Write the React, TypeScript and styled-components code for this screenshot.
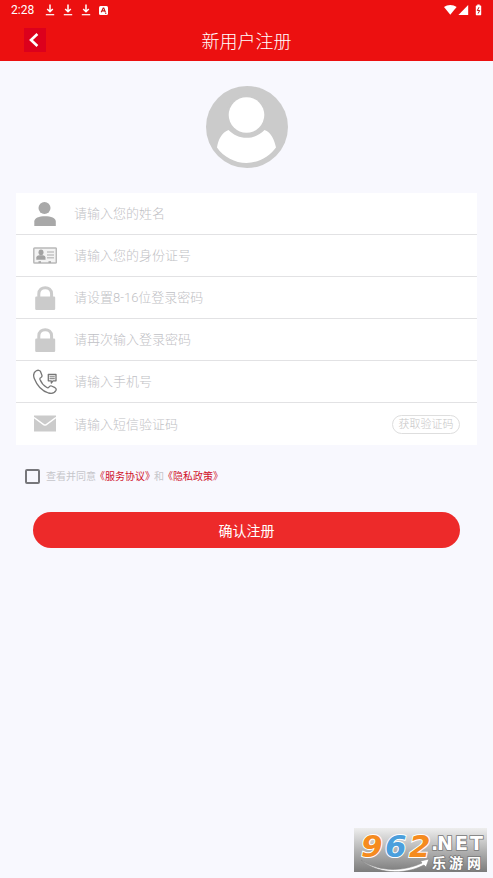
import React from "react";
import styled, { createGlobalStyle } from "styled-components";

const GlobalStyle = createGlobalStyle`
  *, *::before, *::after { box-sizing: border-box; }
  body {
    margin: 0;
    background: #f8f8fe;
    font-family: Roboto, "Noto Sans CJK SC", sans-serif;
  }
`;

const Page = styled.div`
  min-height: 100vh;
  display: flex;
  flex-direction: column;
`;

const Header = styled.header`
  background: #ec1010;
  color: #fff;
`;

const StatusBar = styled.div`
  height: 20px;
  padding: 0 11px;
  display: flex;
  align-items: center;
  justify-content: space-between;
  font-size: 12px;
  font-weight: 400;
`;

const StatusGroup = styled.div`
  display: flex;
  align-items: center;
  gap: 8px;
  svg { display: block; }
`;

const Clock = styled.span`
  margin-right: 3px;
`;

const TitleBar = styled.div`
  height: 41px;
  padding: 0 24px 1px;
  display: grid;
  grid-template-columns: 22px 1fr 22px;
  align-items: center;
`;

const BackButton = styled.button`
  width: 22px;
  height: 24px;
  padding: 0;
  border: 0;
  background: #dc001c;
  color: #fff;
  display: grid;
  place-items: center;
`;

const Title = styled.h1`
  margin: 0;
  padding-top: 3px;
  font-size: 18px;
  line-height: 24px;
  font-weight: 300;
  text-align: center;
`;

const Form = styled.form`
  display: flex;
  flex-direction: column;
`;

const Avatar = styled.div`
  display: flex;
  justify-content: center;
  padding: 25px 0;
  svg { display: block; }
`;

const Fields = styled.div`
  margin: 0 16px;
  background: #fff;
`;

const Row = styled.div`
  height: 42px;
  padding: 0 17px;
  display: flex;
  align-items: center;
  gap: 17px;
  border-bottom: 1px solid #e2e2e4;
  &:last-child { border-bottom: 0; }
`;

const RowLabel = styled.label`
  flex: none;
  width: 24px;
  height: 26px;
  svg { display: block; }
`;

const Input = styled.input`
  flex: 1;
  min-width: 0;
  height: 32px;
  padding: 0;
  border: 0;
  outline: 0;
  background: transparent;
  color: #555;
  font: 300 13px/20px Roboto, "Noto Sans CJK SC", sans-serif;
  &::placeholder { color: #bfc1c5; opacity: 1; }
`;

const CodeButton = styled.button`
  flex: none;
  width: 68px;
  height: 19px;
  padding: 1px 0 0;
  border: 1px solid #dedede;
  border-radius: 10px;
  background: #fff;
  color: #c6c6c6;
  font: 300 11px/16px Roboto, "Noto Sans CJK SC", sans-serif;
`;

const Terms = styled.div`
  display: flex;
  align-items: center;
  margin: 23px 25px 0;
  height: 17px;
  font-size: 10px;
  line-height: 16px;
  color: #c6c6ca;
`;

const Checkbox = styled.input`
  appearance: none;
  flex: none;
  width: 15px;
  height: 15px;
  margin: 0 6px 0 0;
  border: 2px solid #77777b;
  border-radius: 2px;
  &:checked { background: #ec2a2a; }
`;

const TermsLink = styled.a`
  margin: 0 -1px;
  color: #d0122b;
  text-decoration: none;
`;

const Submit = styled.button`
  margin: 27px 33px 0;
  height: 36px;
  padding: 2px 0 0;
  border: 0;
  border-radius: 18px;
  background: #ed2a2a;
  color: #fff;
  font: 400 14px/20px Roboto, "Noto Sans CJK SC", sans-serif;
`;

const Footer = styled.footer`
  margin-top: auto;
  padding: 24px 6px 6px 0;
  display: flex;
  justify-content: flex-end;
  svg { display: block; }
`;

const DownloadIcon = () => (
  <svg width="10" height="12" viewBox="0 0 10 12" fill="none" stroke="#fff">
    <path d="M5 0.5V7.5M2.2 5L5 7.8L7.8 5" strokeWidth="1.5" />
    <path d="M0.8 10.7H9.2" strokeWidth="1.2" />
  </svg>
);

const KeyboardIcon = () => (
  <svg width="9" height="9" viewBox="0 0 9 9">
    <rect width="9" height="9" rx="1.5" fill="#fff" />
    <path d="M2.2 6.3L4.2 2H4.8L6.4 6.3M3 4.9H5.8M6 7.2H7.4" fill="none" stroke="#c31212" strokeWidth="1.1" />
  </svg>
);

const SignalIcons = () => (
  <svg width="38" height="12" viewBox="0 0 38 12" fill="#fff">
    <path d="M0 3.1C3.4 0.2 9.2 0.2 12.6 3.1L6.3 10.8Z" />
    <path d="M24.2 1V11H14.4Z" />
    <path d="M32.4 1.4H33.3V0.5H35.7V1.4H36.6Q37.2 1.4 37.2 2V10.6Q37.2 11.2 36.6 11.2H32.4Q31.8 11.2 31.8 10.6V2Q31.8 1.4 32.4 1.4Z" />
    <path d="M35 3.2L33.3 6.5H35.7L34.1 9.5" fill="none" stroke="#c31212" strokeWidth="1" />
  </svg>
);

const ChevronIcon = () => (
  <svg width="14" height="16" viewBox="0 0 14 16" fill="none" stroke="#fff" strokeWidth="2.6">
    <path d="M9.400 2L3 8L9.400 14" />
  </svg>
);

const AvatarIcon = () => (
  <svg width="82" height="82" viewBox="0 0 82 82" role="img" aria-label="头像">
    <circle cx="41" cy="41" r="41" fill="#cbcbcb" />
    <path
      d="M22.5 44C15.5 46.5 12.2 54 11 61.5C17.5 71 29 77 40.5 77C52 77 63.5 70.5 70 61.5C68.5 54 65 46 58.5 44C53.5 49 47.5 51.8 40.5 51.8C33.5 51.8 27.5 49 22.5 44Z"
      fill="#fff"
    />
    <circle cx="40.5" cy="29" r="20.5" fill="#cbcbcb" />
    <circle cx="40.5" cy="29" r="17.8" fill="#fff" />
  </svg>
);

const PersonIcon = () => (
  <svg width="24" height="26" viewBox="0 0 24 26" fill="#a8a8a8">
    <circle cx="11.5" cy="7" r="6" />
    <path d="M1.3 25V20.5C1.3 17 6 15.300 12 15.300S22.800 17 22.800 20.500V25Z" />
  </svg>
);

const IdCardIcon = () => (
  <svg width="24" height="26" viewBox="0 0 24 26">
    <rect x="0.800" y="5" width="22.500" height="15" rx="0.800" fill="#f3f3f3" stroke="#b9b9b9" strokeWidth="1.500" />
    <ellipse cx="8" cy="9.300" rx="2.500" ry="2.900" fill="#a3a3a3" />
    <path d="M3.300 16.800V14.500Q3.300 12.800 6 12.300H10Q12.500 12.800 12.500 14.500V16.800Z" fill="#a3a3a3" />
    <path d="M14 9H21M14 11.900H21M14 14.800H21" stroke="#c3c3c3" strokeWidth="1.500" />
    <path d="M5.500 19H8M15.500 19H18" stroke="#a3a3a3" strokeWidth="1.400" />
  </svg>
);

const LockIcon = () => (
  <svg width="24" height="26" viewBox="0 0 24 26">
    <path d="M5.800 13V9C5.800 0.500 18.600 0.500 18.600 9V13" fill="none" stroke="#cbcbcb" strokeWidth="3" />
    <rect x="2.200" y="11.500" width="20" height="13.500" rx="1.200" fill="#cbcbcb" />
  </svg>
);

const PhoneIcon = () => (
  <svg width="24" height="26" viewBox="0 0 24 26" fill="none" stroke="#777" strokeWidth="1.300" strokeLinejoin="round">
    <path d="M3.300 1.800C0.800 3.200 0.200 6.500 1.300 9.500C4 16.500 9 22 15.500 24C18.500 24.800 21.800 24 23 21.300C23.500 20 23 19.300 22 18.700L18.500 17C17.200 16.500 16.500 17.200 15.900 18.200C15.300 19 14.500 19 13.500 18.300C10.500 16.500 8.300 13.800 7 10.500C6.700 9.500 7 8.900 7.900 8.500C8.900 8 9.200 7.300 8.900 6.200L7.500 2.500C6.900 1 4.700 1 3.300 1.800Z" />
    <path d="M15.300 5.500H23V11.800H20L18.300 14V11.800H15.300Z" />
    <path d="M16.500 7.800H21.800M16.500 9.700H21.800" strokeWidth="1" />
  </svg>
);

const MailIcon = () => (
  <svg width="24" height="26" viewBox="0 0 24 26">
    <path d="M1 4.500H23V20.500H1Z" fill="#cbcbcb" />
    <path d="M1 6.500L11 13.800Q12 14.300 13 13.800L23 6.500" fill="none" stroke="#fff" strokeWidth="1.500" />
  </svg>
);

const SiteLogo = () => (
  <svg width="133" height="44" viewBox="0 0 133 44" role="img" aria-label="962.NET 乐游网">
    <defs>
      <linearGradient id="plate" x1="0" y1="0" x2="0" y2="1">
        <stop offset="0" stopColor="#eeeeee" />
        <stop offset="0.5" stopColor="#b4b4b4" />
        <stop offset="1" stopColor="#7c7c7c" />
      </linearGradient>
    </defs>
    <rect width="133" height="44" fill="url(#plate)" />
    <g
      fontFamily="DejaVu Sans, sans-serif"
      fontWeight="700"
      fontStyle="italic"
      fontSize="31"
      stroke="#fff"
      strokeWidth="2"
      paintOrder="stroke"
    >
      <text x="7" y="29" fill="#f58b1f">9</text>
      <text x="31" y="29" fill="#4b9fdc">6</text>
      <text x="55" y="29" fill="#f58b1f">2</text>
    </g>
    <path d="M7 32C24 44 49 44 68 35L66.5 33L75 31L72 39L70 37C49 48 22 45 7 32Z" fill="#fff" stroke="#858585" strokeWidth="0.6" />
    <g fill="#fff" stroke="#777" strokeWidth="1.6" paintOrder="stroke" fontWeight="700">
      <text x="77 83 101 116" y="22" fontFamily="DejaVu Sans, sans-serif" fontSize="19">.NET</text>
      <g fontFamily="Noto Sans CJK SC, sans-serif" fontSize="14">
        <text x="78" y="40">乐</text>
        <text x="95" y="40">游</text>
        <text x="113" y="40">网</text>
      </g>
    </g>
  </svg>
);

const fields = [
  { id: "name", type: "text", label: "姓名", placeholder: "请输入您的姓名", Icon: PersonIcon },
  { id: "idcard", type: "text", label: "身份证号", placeholder: "请输入您的身份证号", Icon: IdCardIcon },
  { id: "password", type: "password", label: "登录密码", placeholder: "请设置8-16位登录密码", Icon: LockIcon },
  { id: "confirm", type: "password", label: "确认密码", placeholder: "请再次输入登录密码", Icon: LockIcon },
  { id: "phone", type: "tel", label: "手机号", placeholder: "请输入手机号", Icon: PhoneIcon },
  { id: "code", type: "text", label: "短信验证码", placeholder: "请输入短信验证码", Icon: MailIcon },
];

export default function App() {
  return (
    <Page>
      <GlobalStyle />
      <Header>
        <StatusBar>
          <StatusGroup>
            <Clock>2:28</Clock>
            <DownloadIcon />
            <DownloadIcon />
            <DownloadIcon />
            <KeyboardIcon />
          </StatusGroup>
          <StatusGroup>
            <SignalIcons />
          </StatusGroup>
        </StatusBar>
        <TitleBar>
          <BackButton type="button" aria-label="返回">
            <ChevronIcon />
          </BackButton>
          <Title>新用户注册</Title>
        </TitleBar>
      </Header>
      <Form onSubmit={(e) => e.preventDefault()}>
        <Avatar>
          <AvatarIcon />
        </Avatar>
        <Fields>
          {fields.map(({ id, type, label, placeholder, Icon }) => (
            <Row key={id}>
              <RowLabel htmlFor={id} aria-label={label}>
                <Icon />
              </RowLabel>
              <Input id={id} type={type} placeholder={placeholder} />
              {id === "code" && <CodeButton type="button">获取验证码</CodeButton>}
            </Row>
          ))}
        </Fields>
        <Terms>
          <Checkbox id="agree" type="checkbox" />
          <label htmlFor="agree">查看并同意</label>
          <TermsLink href="#service">《服务协议》</TermsLink>
          <span>和</span>
          <TermsLink href="#privacy">《隐私政策》</TermsLink>
        </Terms>
        <Submit type="submit">确认注册</Submit>
      </Form>
      <Footer>
        <SiteLogo />
      </Footer>
    </Page>
  );
}
